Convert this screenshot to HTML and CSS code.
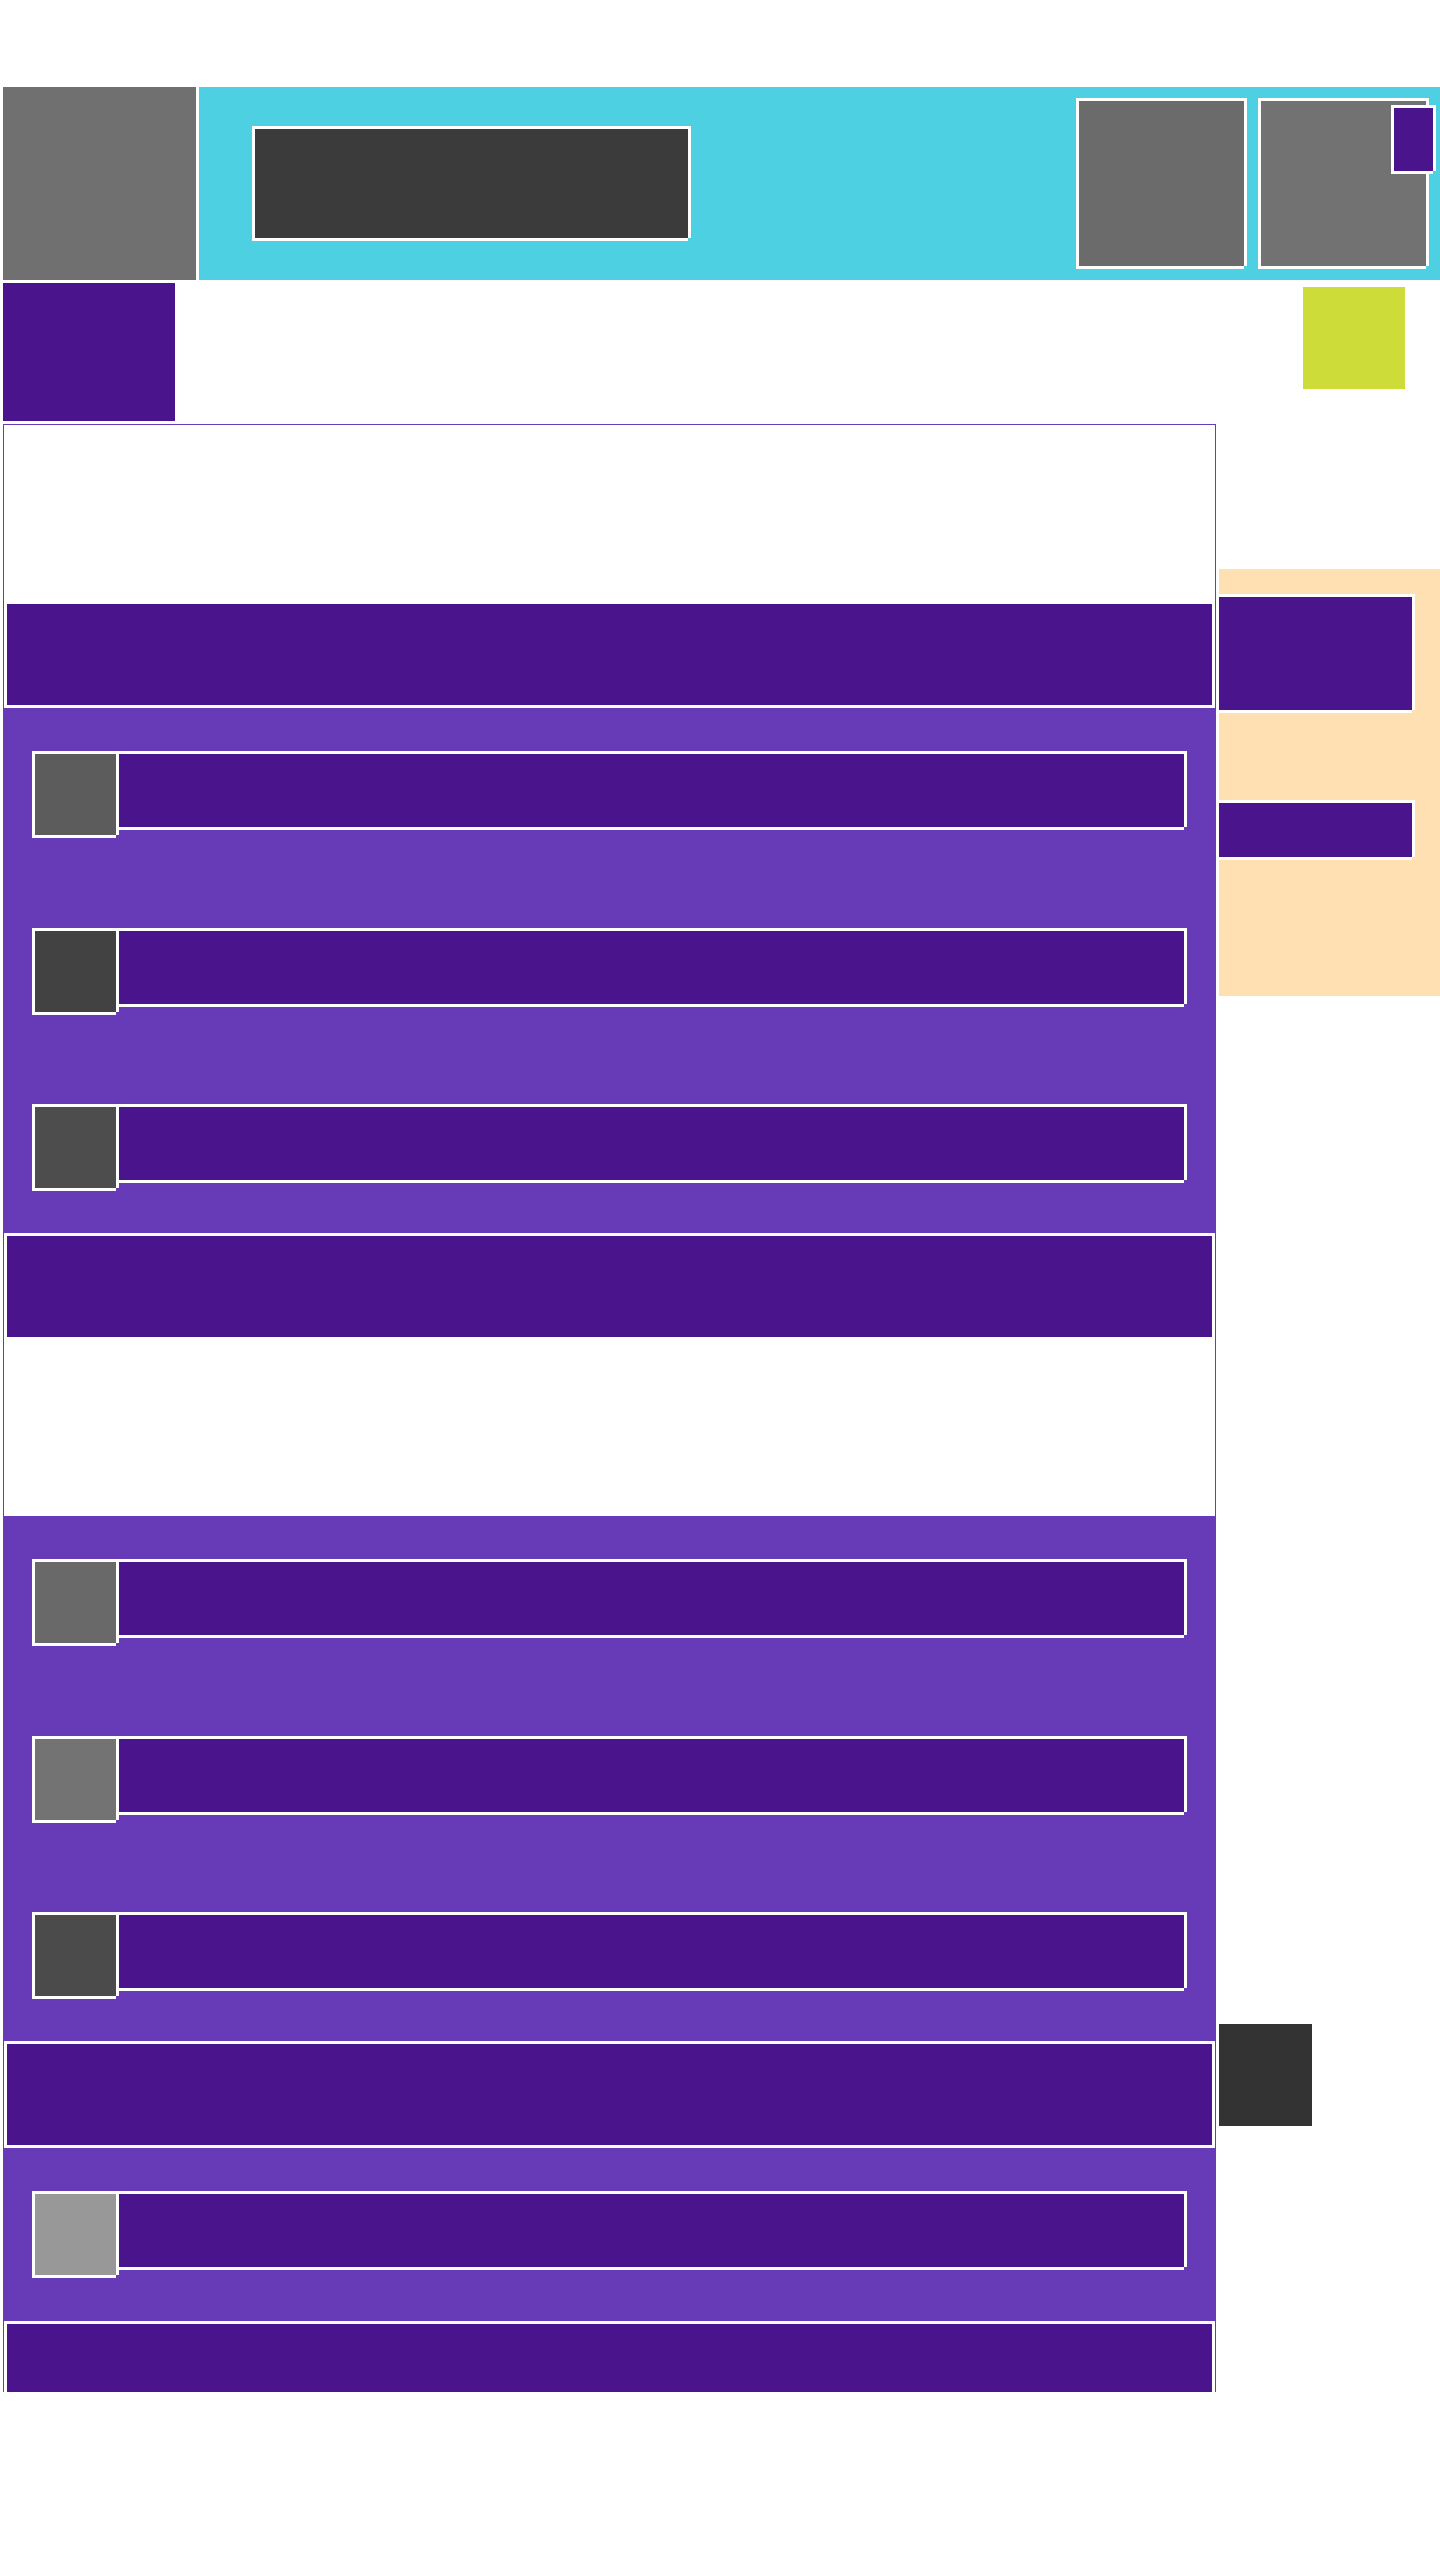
FILE: index.html
```html
<!DOCTYPE html>
<html lang="en">
<head>
<meta charset="utf-8">
<title>Layout</title>
<link rel="stylesheet" href="styles.css">
</head>
<body>
<div class="page">
  <header class="header">
    <div class="logo"></div>
    <div class="topbar">
      <div class="search framed"></div>
      <div class="topbar-fill"></div>
      <div class="tile tile-a framed"></div>
      <div class="tile tile-b framed">
        <span class="badge framed"></span>
      </div>
    </div>
  </header>

  <div class="subbar">
    <div class="subbar-block"></div>
    <div class="subbar-lime"></div>
  </div>

  <div class="main">
    <div class="panel">
      <div class="spacer"></div>
      <div class="darkbar framed"></div>
      <section class="list list-3">
        <div class="row"><div class="thumb framed g1"></div><div class="line framed"></div></div>
        <div class="row"><div class="thumb framed g2"></div><div class="line framed"></div></div>
        <div class="row"><div class="thumb framed g3"></div><div class="line framed"></div></div>
      </section>
      <div class="darkbar framed"></div>
      <div class="spacer"></div>
      <section class="list list-3">
        <div class="row"><div class="thumb framed g4"></div><div class="line framed"></div></div>
        <div class="row"><div class="thumb framed g5"></div><div class="line framed"></div></div>
        <div class="row"><div class="thumb framed g6"></div><div class="line framed"></div></div>
      </section>
      <div class="darkbar framed"></div>
      <section class="list list-1">
        <div class="row"><div class="thumb framed g7"></div><div class="line framed"></div></div>
      </section>
      <div class="darkbar framed"></div>
    </div>

    <aside class="sidebar">
      <div class="peach">
        <div class="side-card framed"></div>
        <div class="side-strip framed"></div>
      </div>
      <div class="side-dark"></div>
    </aside>
  </div>
</div>
</body>
</html>
```

FILE: styles.css
```css
html, body {
  margin: 0;
  padding: 0;
  background: #ffffff;
  font-family: "Liberation Sans", Arial, sans-serif;
}

.page {
  padding: 87px 0 0 3px;
  display: flex;
  flex-direction: column;
  gap: 3px;
}

/* white frame: top/right border + left/bottom offset shadow */
.framed {
  box-sizing: border-box;
  border-top: 3px solid #ffffff;
  border-right: 3px solid #ffffff;
  box-shadow: -3px 3px 0 #ffffff, -3px 0 0 #ffffff;
}

/* header */
.header {
  display: flex;
  gap: 3px;
  height: 193px;
}

.logo {
  width: 193px;
  flex: none;
  background: #707070;
}

.topbar {
  flex: 1;
  display: flex;
  align-items: flex-start;
  background: #4dd0e1;
}

.search {
  width: 436px;
  height: 112px;
  margin: 39px 0 0 56px;
  background: #3b3b3b;
}

.topbar-fill {
  flex: 1;
}

.tile {
  width: 168px;
  height: 168px;
  margin-top: 11px;
  flex: none;
}

.tile-a {
  background: #6b6b6b;
  margin-right: 14px;
}

.tile-b {
  background: #727272;
  margin-right: 11px;
  position: relative;
}

.badge {
  position: absolute;
  left: 133px;
  top: 4px;
  width: 42px;
  height: 66px;
  background: #4a148c;
}

/* sub bar */
.subbar {
  display: flex;
  justify-content: space-between;
  align-items: flex-start;
  height: 138px;
}

.subbar-block {
  width: 172px;
  height: 138px;
  background: #4a148c;
}

.subbar-lime {
  width: 102px;
  height: 102px;
  margin: 4px 35px 0 0;
  background: #cddc39;
}

/* main */
.main {
  display: flex;
  gap: 3px;
  align-items: flex-start;
}

.panel {
  box-sizing: border-box;
  width: 1213px;
  height: 1968px;
  flex: none;
  overflow: hidden;
  background: #ffffff;
  border: 1px solid #673ab7;
  border-bottom: none;
}

.spacer {
  height: 176px;
}

.darkbar {
  height: 104px;
  margin: 0 0 3px 3px;
  background: #4a148c;
}

.list {
  box-sizing: border-box;
  background: #673ab7;
  padding-top: 43px;
  display: flex;
  flex-direction: column;
  gap: 92.5px;
}

.list-3 { height: 525px; }
.list-1 { height: 173px; }

.row {
  display: flex;
  align-items: flex-start;
  height: 84px;
  margin: 0 28px 0 31px;
}

.thumb {
  width: 84px;
  height: 84px;
  flex: none;
}

.line {
  flex: 1;
  height: 76px;
  background: #4a148c;
}

.g1 { background: #5c5c5c; }
.g2 { background: #424242; }
.g3 { background: #4d4d4d; }
.g4 { background: #696969; }
.g5 { background: #737373; }
.g6 { background: #4b4b4b; }
.g7 { background: #989898; }

/* sidebar */
.sidebar {
  flex: 1;
  display: flex;
  flex-direction: column;
}

.peach {
  box-sizing: border-box;
  margin-top: 145px;
  height: 427px;
  padding-top: 25px;
  background: #ffe0b2;
}

.side-card {
  width: 196px;
  height: 116px;
  background: #4a148c;
}

.side-strip {
  width: 196px;
  height: 57px;
  margin-top: 90px;
  background: #4a148c;
}

.side-dark {
  width: 93px;
  height: 102px;
  margin-top: 1028px;
  background: #333333;
}
```
